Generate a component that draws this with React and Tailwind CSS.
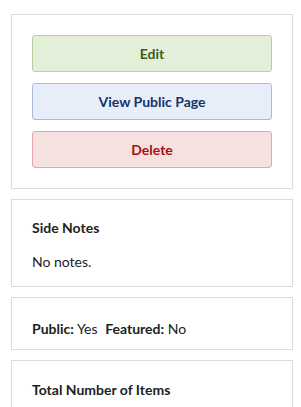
export default function App() {
  return (
    <div className="h-screen overflow-hidden bg-white pl-[11px] pr-[8px] pt-[14px] font-['Lato',sans-serif] text-[14px] text-[#222]">
      {/* Actions */}
      <div className="flex flex-col gap-[11px] border border-[#dedcd4] p-5">
        <button className="h-[37px] rounded-[3px] border border-[#b8d1a3] bg-[#e4efda] font-bold text-[#3b6115]">
          Edit
        </button>
        <button className="h-[37px] rounded-[3px] border border-[#a9bdd9] bg-[#e7eef9] font-bold text-[#15346a]">
          View Public Page
        </button>
        <button className="h-[37px] rounded-[3px] border border-[#e2a6a6] bg-[#f6e1e1] font-bold text-[#a90f0f]">
          Delete
        </button>
      </div>

      <div className="mt-[10px] border border-[#dedcd4] px-5 pt-[18px] pb-[14px]">
        <h3 className="font-bold leading-5">Side Notes</h3>
        <p className="mt-[14px] leading-5">No notes.</p>
      </div>

      <div className="mt-[10px] border border-[#dedcd4] px-5 pt-[21px] pb-[10px]">
        <p className="leading-5">
          <span className="font-bold">Public:</span> Yes{" "}
          <span className="ml-1 font-bold">Featured:</span> No
        </p>
      </div>

      <div className="mt-[10px] h-[60px] border border-[#dedcd4] px-5 pt-[19px]">
        <h3 className="font-bold leading-5">Total Number of Items</h3>
      </div>
    </div>
  );
}
